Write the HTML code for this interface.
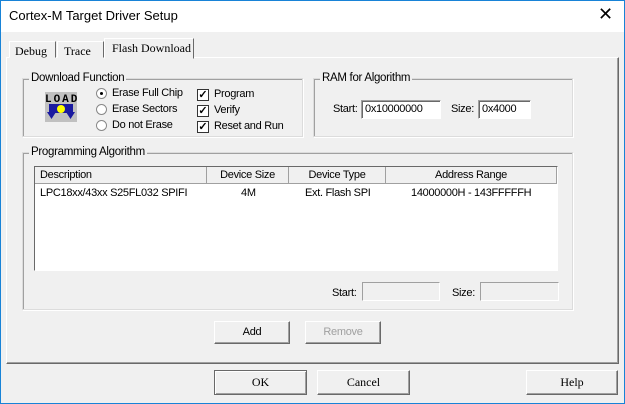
<!DOCTYPE html>
<html><head><style>
*{box-sizing:border-box;margin:0;padding:0}
body{width:625px;height:404px;background:#f0f0f0;position:relative;overflow:hidden;font-family:"Liberation Sans",sans-serif;font-size:11px;color:#000;letter-spacing:-0.3px}
.a{position:absolute}
.win{left:0;top:0;width:625px;height:404px;border:1px solid #1883d7}
.title{left:1px;top:1px;width:623px;height:31px;background:#fff}
.grp{border:1px solid #dcdcdc;box-shadow:inset 1px 1px 0 #a0a0a0, 1px 1px 0 #fff}
.gl{background:#f0f0f0;padding:0 2px;font-size:11.5px}
.edit{background:#fff;border:1px solid;border-color:#a0a0a0 #fff #fff #a0a0a0;box-shadow:inset 1px 1px 0 #696969;padding:2px 3px;font-size:11px}
.btn{border:1px solid;border-color:#fff #696969 #696969 #fff;box-shadow:inset -1px -1px 0 #a0a0a0;background:#f0f0f0;text-align:center;font-size:11px}
.serif{font-family:"Liberation Serif",serif;font-size:12px;letter-spacing:0}
.hd{background:#f0f0f0;border-right:1px solid #a0a0a0;border-bottom:1px solid #a0a0a0;text-align:center;height:17px;line-height:16px;top:0}
.cb{width:12px;height:12px;border:1px solid #333;background:#fff;font-size:11px;line-height:10px;text-align:center;font-weight:bold;letter-spacing:0}
.rb{width:11px;height:11px;border:1px solid #888;border-radius:50%;background:#fff}
</style></head><body>
<div class="a win"></div>
<div class="a title"></div>
<div class="a" style="left:9px;top:8px;font-size:13px;letter-spacing:0">Cortex-M Target Driver Setup</div>
<div class="a" style="left:598px;top:4px;font-size:18px;font-weight:300">✕</div>
<div class="a" style="left:6px;top:57px;width:613px;height:307px;border:1px solid;border-color:#fff #696969 #696969 #fff;box-shadow:inset -1px -1px 0 #a0a0a0"></div>
<div class="a serif" style="left:9px;top:41px;width:47px;height:17px;border:1px solid;border-color:#fff #696969 #f0f0f0 #fff;padding:2px 0 0 5px">Debug</div>
<div class="a serif" style="left:57px;top:41px;width:47px;height:17px;border:1px solid;border-color:#fff #696969 #f0f0f0 #fff;padding:2px 0 0 6px">Trace</div>
<div class="a serif" style="left:104px;top:38px;width:90px;height:21px;border:1px solid;border-color:#fff #696969 #f0f0f0 #fff;background:#f0f0f0;padding:2px 0 0 7px">Flash Download</div>
<div class="a grp" style="left:22px;top:78px;width:281px;height:59px"></div>
<div class="a gl" style="left:29px;top:72px">Download Function</div>
<svg class="a" style="left:45px;top:92px" width="32" height="30" viewBox="0 0 32 30">
<rect x="0" y="0" width="32" height="30" fill="#c0c0c0"/>
<text x="0" y="10" font-family="Liberation Mono" font-weight="bold" font-size="11" fill="#000" textLength="32">LOAD</text>
<rect x="4" y="12" width="24" height="9" fill="#1a1aa0"/>
<path d="M2 20h9l-4.5 7zM21 20h9l-4.5 7z" fill="#1a1aa0"/>
<circle cx="16" cy="17" r="4" fill="#ff0"/>
</svg>
<div class="a rb" style="left:96px;top:88px"><div style="width:3px;height:3px;background:#000;border-radius:50%;margin:3px"></div></div>
<div class="a" style="left:112px;top:87px">Erase Full Chip</div>
<div class="a rb" style="left:96px;top:104px"></div>
<div class="a" style="left:112px;top:103px">Erase Sectors</div>
<div class="a rb" style="left:96px;top:120px"></div>
<div class="a" style="left:112px;top:119px">Do not Erase</div>
<div class="a cb" style="left:197px;top:89px">✓</div>
<div class="a" style="left:214px;top:88px">Program</div>
<div class="a cb" style="left:197px;top:105px">✓</div>
<div class="a" style="left:214px;top:104px">Verify</div>
<div class="a cb" style="left:197px;top:121px">✓</div>
<div class="a" style="left:214px;top:120px">Reset and Run</div>
<div class="a grp" style="left:313px;top:78px;width:260px;height:59px"></div>
<div class="a gl" style="left:320px;top:72px">RAM for Algorithm</div>
<div class="a" style="left:333px;top:103px">Start:</div>
<div class="a edit" style="left:361px;top:100px;width:80px;height:19px">0x10000000</div>
<div class="a" style="left:451px;top:103px">Size:</div>
<div class="a edit" style="left:478px;top:100px;width:53px;height:19px">0x4000</div>
<div class="a grp" style="left:22px;top:152px;width:551px;height:158px"></div>
<div class="a gl" style="left:29px;top:146px">Programming Algorithm</div>
<div class="a" style="left:34px;top:166px;width:524px;height:105px;background:#fff;border:1px solid;border-color:#696969 #fff #fff #696969">
 <div class="a hd" style="left:0;width:172px;text-align:left;padding-left:5px">Description</div>
 <div class="a hd" style="left:172px;width:82px">Device Size</div>
 <div class="a hd" style="left:254px;width:97px">Device Type</div>
 <div class="a hd" style="left:351px;width:171px">Address Range</div>
 <div class="a" style="left:5px;top:20px">LPC18xx/43xx S25FL032 SPIFI</div>
 <div class="a" style="left:206px;top:20px">4M</div>
 <div class="a" style="left:270px;top:20px">Ext. Flash SPI</div>
 <div class="a" style="left:376px;top:20px">14000000H - 143FFFFFH</div>
</div>
<div class="a" style="left:332px;top:287px">Start:</div>
<div class="a edit" style="left:362px;top:282px;width:78px;height:19px;background:#f0f0f0;box-shadow:none"></div>
<div class="a" style="left:452px;top:287px">Size:</div>
<div class="a edit" style="left:480px;top:282px;width:79px;height:19px;background:#f0f0f0;box-shadow:none"></div>
<div class="a btn" style="left:214px;top:321px;width:76px;height:23px;line-height:21px">Add</div>
<div class="a btn" style="left:305px;top:321px;width:76px;height:23px;line-height:21px;color:#a0a0a0">Remove</div>
<div class="a btn serif" style="left:214px;top:370px;width:93px;height:25px;line-height:23px;border-color:#696969;box-shadow:inset 1px 1px 0 #fff,inset -1px -1px 0 #a0a0a0">OK</div>
<div class="a btn serif" style="left:317px;top:370px;width:93px;height:25px;line-height:23px">Cancel</div>
<div class="a btn serif" style="left:526px;top:370px;width:92px;height:25px;line-height:23px">Help</div>
</body></html>
